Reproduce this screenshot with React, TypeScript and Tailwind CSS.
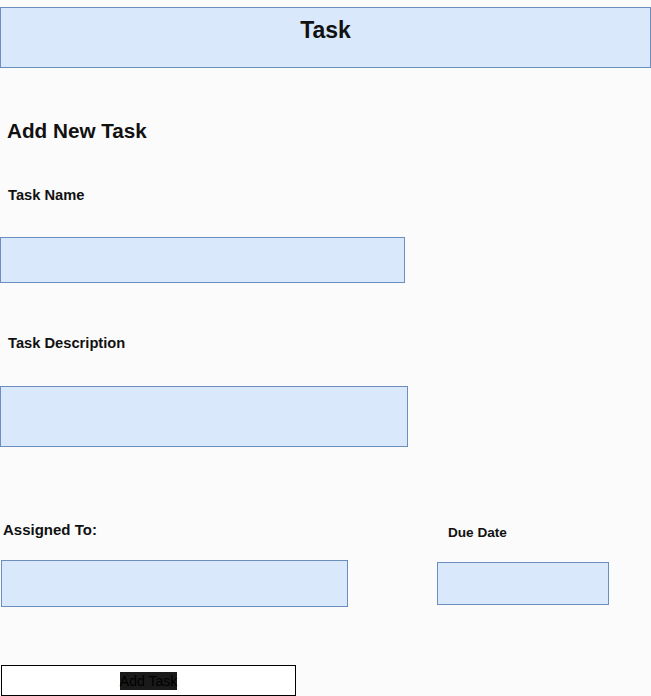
import React from "react";

const font = { fontFamily: '"Liberation Sans", Arial, sans-serif' };

function Field({ className }: { className: string }) {
    return <div className={"border border-[#6c8ebf] bg-[#dae8fc] " + className}></div>;
}

export default function App() {
    return (
        <div style={font} className="w-[651px] min-h-[696px] bg-[#fbfbfb] text-[#111] overflow-hidden">
            {/* header bar */}
            <div className="pt-[7px]">
                <div className="h-[61px] w-[651px] border border-[#6c8ebf] bg-[#dae8fc] pt-[9px] text-center">
                    <h1 className="text-[23px] leading-[26px] font-bold">Task</h1>
                </div>
            </div>

            <h2 className="mt-[51px] pl-[7px] text-[20.7px] leading-[24px] font-bold">Add New Task</h2>

            <p className="mt-[43px] pl-[8px] text-[14.7px] leading-[18px] font-bold">Task Name</p>
            <Field className="mt-[33px] w-[405px] h-[46px]" />

            <p className="mt-[51px] pl-[8px] text-[14.7px] leading-[18px] font-bold">Task Description</p>
            <Field className="mt-[34px] w-[408px] h-[61px]" />

            {/* assigned + due date */}
            <div className="mt-[74px] flex">
                <div className="w-[348px] pl-[1px]">
                    <p className="pl-[2px] text-[15px] leading-[18px] font-bold">Assigned To:</p>
                    <Field className="mt-[21px] w-[347px] h-[47px]" />
                </div>
                <div className="ml-[89px] pt-[3px]">
                    <p className="pl-[11px] text-[13.6px] leading-[18px] font-bold">Due Date</p>
                    <Field className="mt-[20px] w-[172px] h-[43px]" />
                </div>
            </div>

            <div className="mt-[58px] ml-[1px] w-[295px] h-[31px] border border-black bg-white flex items-center justify-center">
                <span className="bg-[#1a1a1a] text-black text-[14px] leading-[18px]">Add Task</span>
            </div>
        </div>
    );
}
